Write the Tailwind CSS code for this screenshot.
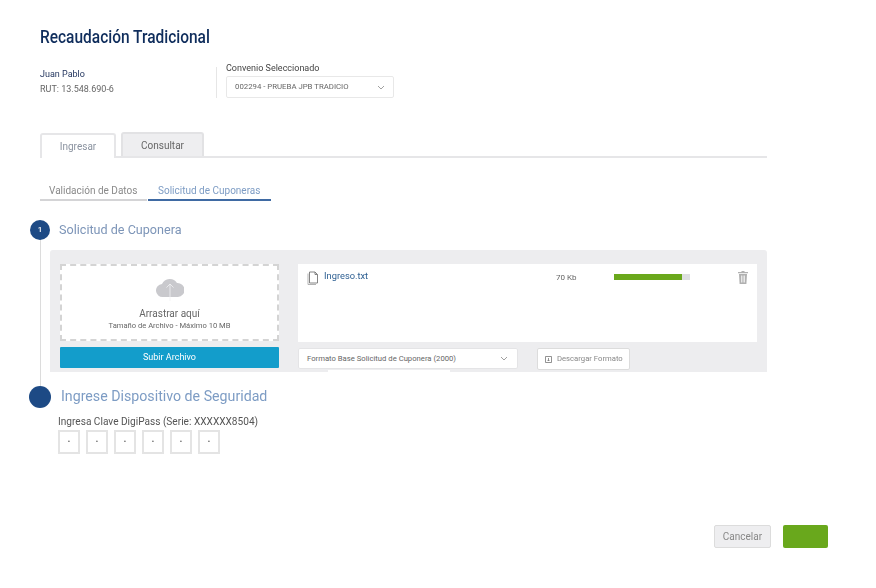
<!DOCTYPE html>
<html lang="en">
<head>
    <meta charset="UTF-8">
    <script src="https://cdn.jsdelivr.net/npm/@tailwindcss/browser@4"></script>
    <title>Recaudación Tradicional</title>
</head>
<body class="bg-white font-['Roboto',sans-serif] text-[#555]">
    <div class="relative w-[876px] h-[588px] overflow-hidden pl-[40px] pt-[26px] blur-[0.3px]">
        <h1 class="origin-left scale-x-[0.86] whitespace-nowrap text-[18px] leading-[21px] font-medium text-[#0f2d5c]">Recaudación Tradicional</h1>

        <div class="flex mt-[11px] h-[41px]">
            <div class="w-[176px] pt-[10px]">
                <p class="text-[9px] leading-[12px] text-[#24365f]">Juan Pablo</p>
                <p class="text-[9px] leading-[12px] mt-[3px] text-[#666]">RUT: 13.548.690-6</p>
            </div>
            <div class="w-px h-[31px] mt-[9px] bg-[#e6e6e6]"></div>
            <div class="ml-[9px]">
                <p class="text-[9px] leading-[12px] mt-[4px] text-[#444]">Convenio Seleccionado</p>
                <div class="flex items-center justify-between w-[168px] h-[22px] mt-[2px] pl-[8px] pr-[8px] border border-[#e8e8e8] rounded-[2px] text-[7.8px] text-[#666]">
                    <span>002294 - PRUEBA JPB TRADICIO</span>
                    <svg width="8" height="5" viewBox="0 0 8 5" fill="none" stroke="#888" stroke-width="0.8"><path d="M1 1l3 3 3-3"/></svg>
                </div>
            </div>
        </div>

        <div class="flex items-end gap-[5px] w-[727px] h-[25px] mt-[34px] border-b-2 border-[#e6e6e8]">
            <div class="flex items-center justify-center w-[76px] h-[25px] -mb-[2px] bg-white border-2 border-b-0 border-[#e6e6e8] rounded-t-[3px] text-[10px] text-[#8b93a0]">Ingresar</div>
            <div class="flex items-center justify-center w-[83px] h-[24px] bg-[#eeeef0] border-2 border-b-0 border-[#e2e2e4] rounded-t-[3px] text-[10px] text-[#666]">Consultar</div>
        </div>

        <div class="flex gap-[1px] mt-[25px] text-[10px]">
            <div class="w-[107px] h-[18px] pl-[9px] border-b-2 border-[#d4d4d6] text-[#8a8a8a] leading-[16px]">Validación de Datos</div>
            <div class="w-[123px] h-[18px] pl-[10px] border-b-2 border-[#3f6aa3] text-[#7d9cc4] leading-[16px]">Solicitud de Cuponeras</div>
        </div>

        <div class="absolute left-[40px] top-[235px] w-px h-[153px] bg-[#dcdcdc]"></div>

        <div class="relative flex items-center h-[20px] mt-[19px] -ml-[10px]">
            <div class="flex items-center justify-center w-[20px] h-[20px] rounded-full bg-[#1d4a85] text-white text-[8px] font-medium">1</div>
            <h2 class="ml-[9px] text-[12.6px] text-[#7d95b8]">Solicitud de Cuponera</h2>
        </div>

        <div class="relative flex gap-[19px] w-[717px] h-[122px] mt-[10px] ml-[10px] pt-[14px] pl-[10px] pr-[10px] bg-[#ededef] rounded-t-[3px]">
            <div class="w-[219px]">
                <div class="flex flex-col items-center h-[77px] pt-[11px] bg-white border-2 border-dashed border-[#d4d4d4]">
                    <svg width="28" height="24" viewBox="0 0 28 24"><path fill="#c9c9cd" d="M7 20a6.500 6.500 0 0 1-1-13A8.500 8.500 0 0 1 21 6a7 7 0 0 1 1 14z"/><path fill="none" stroke="#f2f2f4" stroke-width="0.8" d="M14 24V7M10.500 10.500 14 7l3.500 3.500"/></svg>
                    <p class="text-[10px] leading-[12px] mt-[7px] text-[#666]">Arrastrar aquí</p>
                    <p class="text-[7.6px] leading-[10px] mt-[1px] text-[#666]">Tamaño de Archivo - Máximo 10 MB</p>
                </div>
                <div class="flex items-center justify-center h-[21px] mt-[6px] bg-[#139dcb] rounded-[1px] text-[9px] text-white">Subir Archivo</div>
            </div>
            <div class="w-[459px]">
                <div class="flex items-start h-[78px] pt-[6px] pl-[9px] pr-[8px] bg-white">
                    <svg class="mt-[1px]" width="12" height="14" viewBox="0 0 12 14" fill="none" stroke="#777" stroke-width="0.9"><path d="M2.500 1h5.500l2.500 2.500V12H2.500z"/><path d="M8 1v2.500h2.500"/><path stroke="#aaa" d="M1 2.500V13.500h8"/></svg>
                    <span class="ml-[5px] w-[232px] text-[9.3px] leading-[12px] text-[#2d5f92]">Ingreso.txt</span>
                    <span class="w-[58px] mt-[2px] text-[8px] leading-[12px] text-[#666]">70 Kb</span>
                    <div class="w-[76px] h-[6px] mt-[4px] bg-[#dedfe1]">
                        <div class="h-full bg-[#6aa81c]" style="width: 89%"></div>
                    </div>
                    <svg class="ml-[48px] mt-[1px]" width="10" height="13" viewBox="0 0 10 13" fill="#b0b0b0"><path d="M3.500 0h3v1H10v1.200H0V1h3.500zM1 3h8l-.6 10H1.600zM3 4.500v7h.7v-7zm1.700 0v7h.7v-7zm1.600 0v7H7v-7z"/></svg>
                </div>
                <div class="flex mt-[6px]">
                    <div class="flex items-center justify-between w-[220px] h-[21px] pl-[8px] pr-[9px] bg-white border border-[#e4e4e6] rounded-[2px] text-[7.7px] text-[#666]">
                        <span>Formato Base Solicitud de Cuponera (2000)</span>
                        <svg width="8" height="5" viewBox="0 0 8 5" fill="none" stroke="#888" stroke-width="0.8"><path d="M1 1l3 3 3-3"/></svg>
                    </div>
                    <div class="flex items-center w-[93px] h-[22px] ml-[19px] pl-[7px] bg-white border border-[#dcdcdc] rounded-[2px] text-[7.7px] text-[#888]">
                        <svg width="7" height="8" viewBox="0 0 7 8" fill="none" stroke="#777" stroke-width="0.8"><path d="M.500 1.500h6v6h-6zM3.500 3v3M2.500 5l1 1 1-1"/></svg>
                        <span class="ml-[5px]">Descargar Formato</span>
                    </div>
                </div>
            </div>
            <div class="absolute left-[278px] bottom-0 w-[122px] h-[2px] bg-white"></div>
        </div>

        <div class="relative flex items-center h-[22px] mt-[14px] -ml-[11px] blur-[0.4px]">
            <div class="w-[22px] h-[22px] rounded-full bg-[#1d4a85]"></div>
            <h2 class="ml-[10px] text-[14.2px] text-[#7d9cc4]">Ingrese Dispositivo de Seguridad</h2>
        </div>

        <div class="ml-[18px] mt-[8px] blur-[0.4px]">
            <p class="text-[10.1px] leading-[12px] text-[#555]">Ingresa Clave DigiPass (Serie: XXXXXX8504)</p>
            <div class="flex gap-[6px] mt-[2px]">
                <div class="flex items-center justify-center w-[22px] h-[24px] border-2 border-[#e4e4e4] text-[7px]">•</div>
                <div class="flex items-center justify-center w-[22px] h-[24px] border-2 border-[#e4e4e4] text-[7px]">•</div>
                <div class="flex items-center justify-center w-[22px] h-[24px] border-2 border-[#e4e4e4] text-[7px]">•</div>
                <div class="flex items-center justify-center w-[22px] h-[24px] border-2 border-[#e4e4e4] text-[7px]">•</div>
                <div class="flex items-center justify-center w-[22px] h-[24px] border-2 border-[#e4e4e4] text-[7px]">•</div>
                <div class="flex items-center justify-center w-[22px] h-[24px] border-2 border-[#e4e4e4] text-[7px]">•</div>
            </div>
        </div>

        <div class="flex gap-[12px] w-[788px] justify-end mt-[71px]">
            <div class="flex items-center justify-center w-[57px] h-[23px] bg-[#eeeef0] border border-[#dcdcdc] rounded-[2px] text-[10px] text-[#888] blur-[0.3px]">Cancelar</div>
            <div class="w-[45px] h-[23px] bg-[#69a81c] rounded-[2px]"></div>
        </div>
    </div>
</body>
</html>
